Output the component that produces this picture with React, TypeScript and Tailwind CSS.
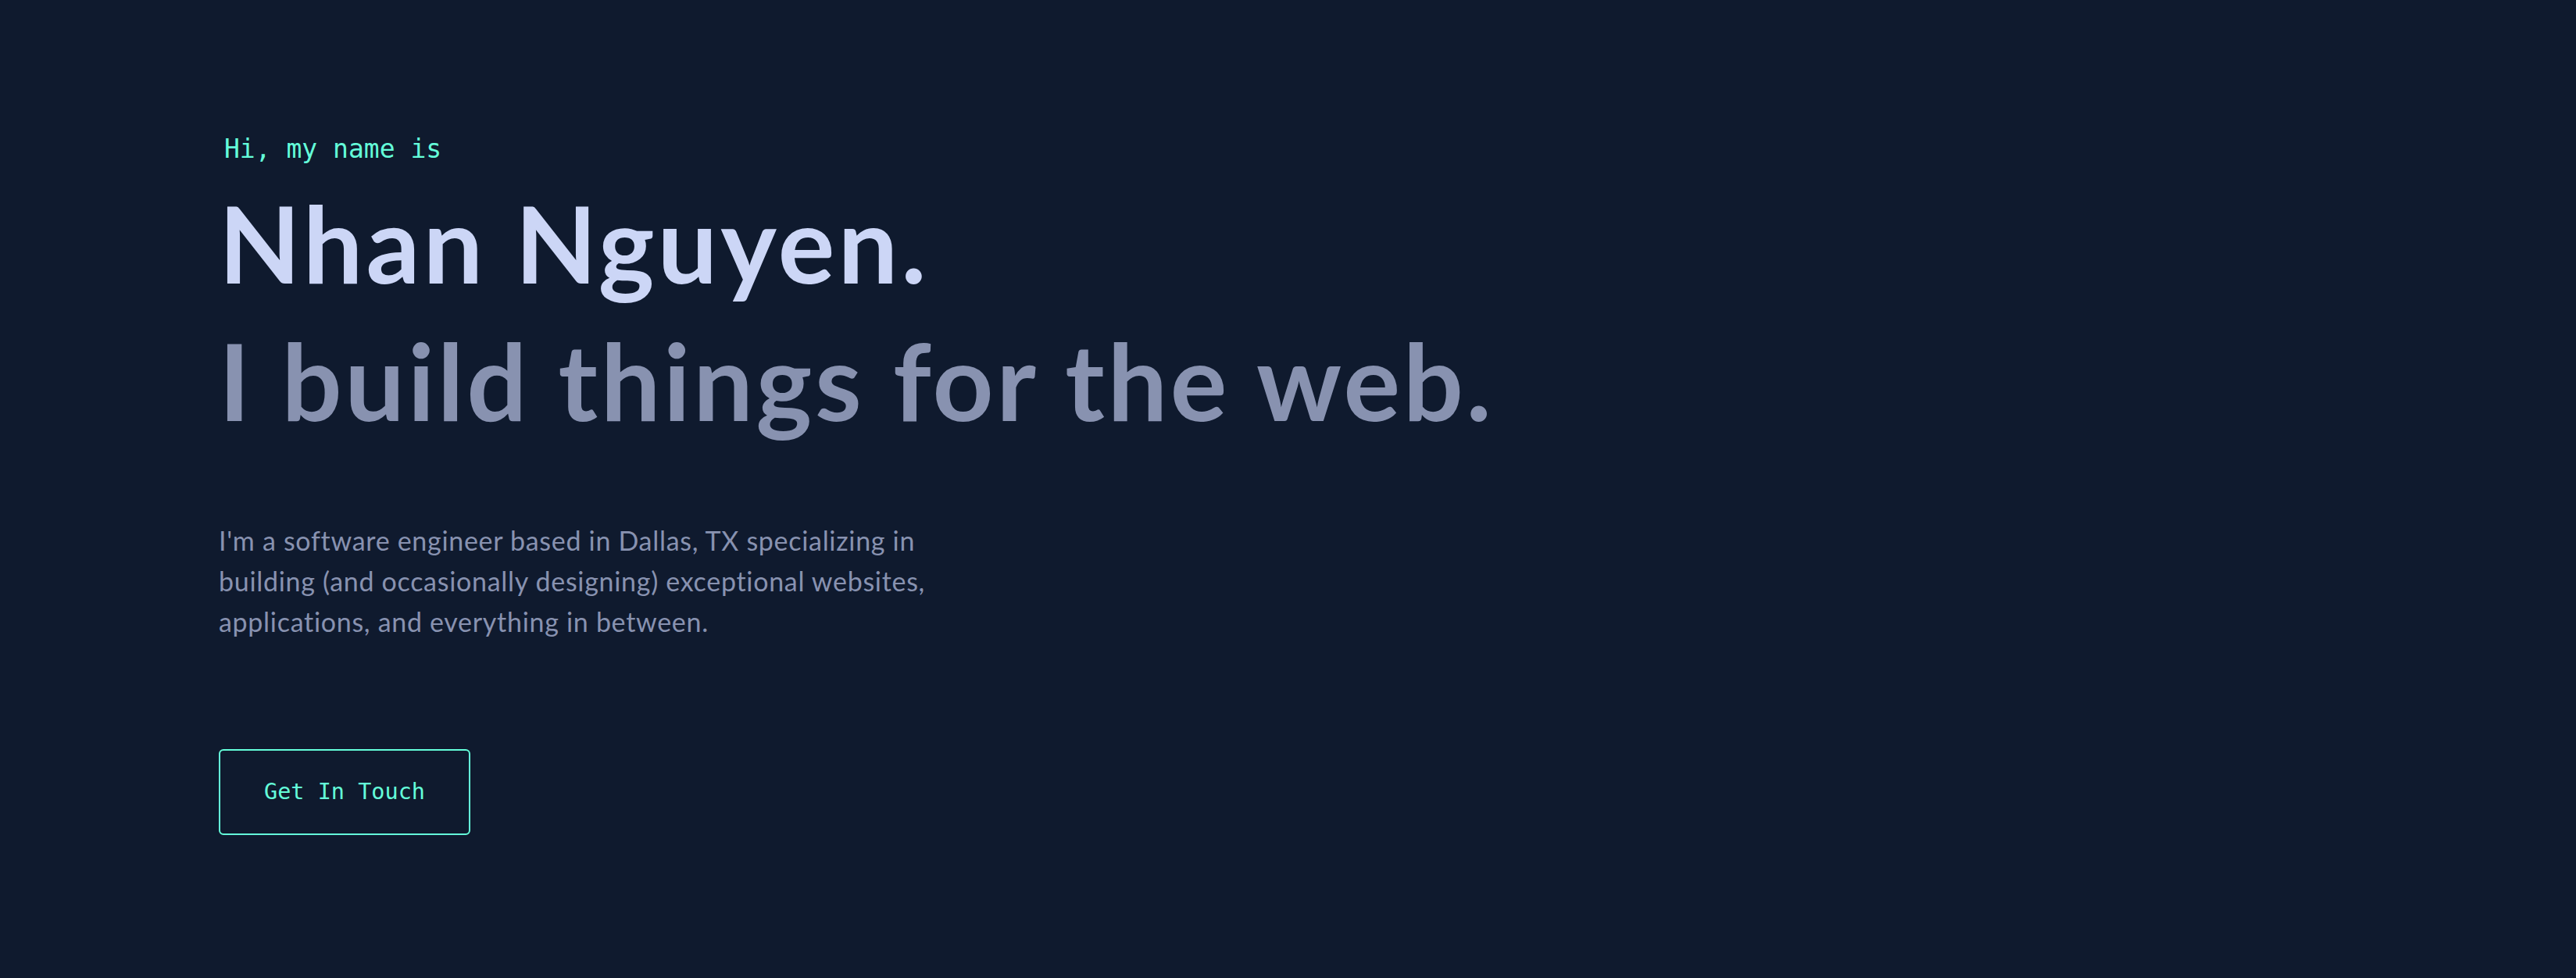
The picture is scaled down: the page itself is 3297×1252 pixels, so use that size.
import React from 'react';

const mono = "font-['DejaVu_Sans_Mono','Liberation_Mono',monospace]";
const sans = "font-['Lato','Inter',sans-serif]";

export default function App() {
  return (
    <div className="min-h-screen w-full bg-[#0f1a2e]">
      <section className="flex flex-col items-start pl-[280px] pt-[171px] pb-[160px]">
        {/* Intro */}
        <h1 className={`${mono} ml-[7px] text-[33px] leading-[40px] text-[#64ffda]`}>Hi, my name is</h1>
        <h2 className={`${sans} mt-[12px] text-[136px] leading-[176px] font-bold tracking-[4px] text-[#ccd6f6]`}>
          Nhan Nguyen.
        </h2>
        <h3 className={`${sans} text-[136px] leading-[176px] font-bold tracking-[3.6px] text-[#8892b0]`}>
          I build things for the web.
        </h3>

        {/* About */}
        <p className={`${sans} mt-[91px] max-w-[960px] text-[34px] leading-[52px] tracking-[0.7px] text-[#8892b0]`}>
          I'm a software engineer based in Dallas, TX specializing in building (and occasionally designing)
          exceptional websites, applications, and everything in between.
        </p>

        {/* CTA */}
        <a
          href="#contact"
          className={`${mono} mt-[137px] flex h-[110px] w-[322px] items-center justify-center rounded-[6px] border-2 border-[#64ffda] text-[28.5px] text-[#64ffda]`}
        >
          Get In Touch
        </a>
      </section>
    </div>
  );
}
